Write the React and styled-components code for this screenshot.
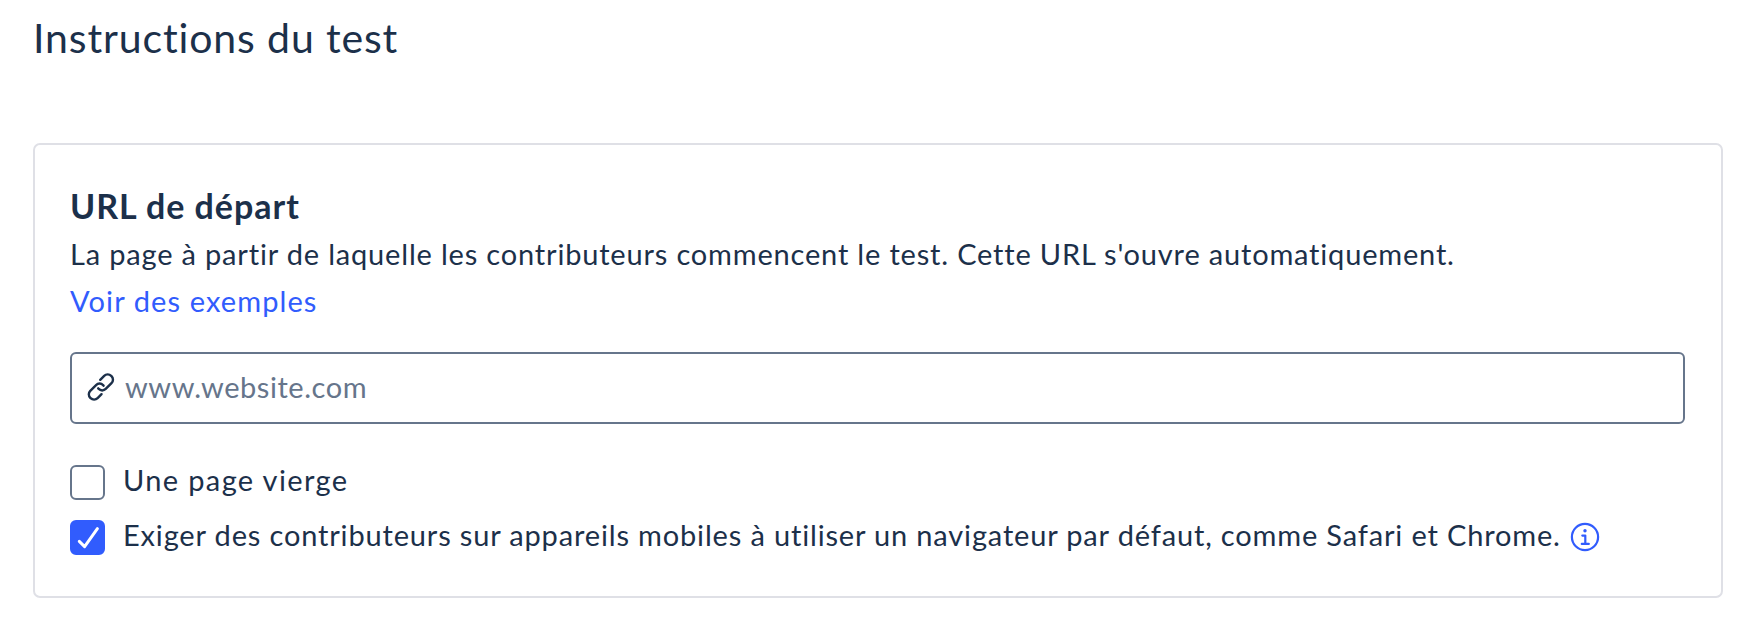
import React, { useState } from 'react'
import styled, { createGlobalStyle } from 'styled-components'

const GlobalStyle = createGlobalStyle`
  * {
    box-sizing: border-box;
  }
  body {
    margin: 0;
    background: #ffffff;
    color: #1c304a;
    font-family: Lato, "Open Sans", sans-serif;
    font-size: 29px;
  }
`;

const Container = styled.main`
  width: 1760px;
  height: 634px;
  padding: 14px 37px 0 33px;
`;

const Title = styled.h1`
  margin: 0 0 81px;
  font-size: 41px;
  font-weight: 400;
  line-height: 48px;
  letter-spacing: 0.87px;
`;

const Card = styled.section`
  height: 455px;
  padding: 39px 36px 0 35px;
  border: 2px solid #dfe0e6;
  border-radius: 7px;
`;

const Heading = styled.h2`
  margin: 0 0 2px;
  font-size: 34px;
  font-weight: 700;
  line-height: 44px;
  letter-spacing: 0.98px;
`;

const Description = styled.p`
  margin: 0;
  line-height: 47px;
  letter-spacing: 0.82px;
  white-space: nowrap;
`;

const ExamplesLink = styled.a`
  display: block;
  width: fit-content;
  line-height: 47px;
  letter-spacing: 1.1px;
  color: #315cfd;
  text-decoration: none;
`;

const Field = styled.label`
  display: flex;
  align-items: center;
  height: 72px;
  margin-top: 28px;
  padding-left: 15px;
  border: 2px solid #66758b;
  border-radius: 6px;
  svg {
    margin-bottom: 2px;
  }
`;

const UrlInput = styled.input`
  flex: 1;
  height: 60px;
  margin-left: 10px;
  padding: 0 0 4px;
  border: 0;
  outline: 0;
  background: transparent;
  font: inherit;
  color: inherit;
  letter-spacing: 0.54px;
  &::placeholder {
    color: #66758b;
    opacity: 1;
  }
`;

const Options = styled.div`
  display: flex;
  flex-direction: column;
  gap: 20px;
  margin-top: 41px;
`;

const Option = styled.label`
  display: flex;
  align-items: flex-start;
  height: 35px;
  cursor: pointer;
  input {
    appearance: none;
    width: 0;
    height: 0;
    margin: 0;
  }
`;

const Box = styled.span`
  display: flex;
  flex: none;
  width: 35px;
  height: 35px;
  margin-right: 18px;
  border: 2px solid ${p => p.$checked ? '#315cfd' : '#66758b'};
  border-radius: 6px;
  background: ${p => p.$checked ? '#315cfd' : '#ffffff'};
`;

const OptionText = styled.span`
  line-height: 30px;
  letter-spacing: ${p => p.$spacing};
  white-space: nowrap;
`;

const InfoButton = styled.button`
  display: flex;
  margin: 2px 0 0 9px;
  padding: 0;
  border: 0;
  background: none;
  cursor: pointer;
`;

const LinkIcon = () => (
  <svg width="28" height="28" viewBox="1 1 25.6 25.6" fill="none" stroke="#1c304a" strokeWidth="2.2" strokeLinecap="round" strokeLinejoin="round">
    <path d="M13.1 7.2l3.6-3.6a4.5 4.5 0 0 1 6.4 0l.3.3a4.5 4.5 0 0 1 0 6.4l-5.3 5.3a4.5 4.5 0 0 1-6.4 0l-.5-.6" />
    <path d="M14.3 20.4l-3.6 3.6a4.5 4.5 0 0 1-6.4 0l-.3-.3a4.5 4.5 0 0 1 0-6.4l5.3-5.3a4.5 4.5 0 0 1 6.4 0l.5.6" />
  </svg>
)

const CheckIcon = () => (
  <svg width="31" height="31" viewBox="0 0 31 31" fill="none" stroke="#ffffff" strokeWidth="3" strokeLinecap="round" strokeLinejoin="round">
    <path d="M7.3 19.4l5.3 5.2L25.4 6.7" />
  </svg>
)

const InfoIcon = () => (
  <svg width="30" height="30" viewBox="0 0 30 30" fill="none" stroke="#315cfd" strokeWidth="2.2" strokeLinecap="round" strokeLinejoin="round">
    <circle cx="15" cy="15" r="13.1" />
    <path d="M12.3 13.6h3v8.2M11.8 21.9h7" />
    <circle cx="15" cy="8.7" r="1.7" fill="#315cfd" stroke="none" />
  </svg>
)

const App = () => {
  const [url, setUrl] = useState('');
  const [blankPage, setBlankPage] = useState(false);
  const [defaultBrowser, setDefaultBrowser] = useState(true);

  return (
    <Container>
      <GlobalStyle />
      <Title>Instructions du test</Title>
      <Card>
        <Heading>URL de départ</Heading>
        <Description>
          La page à partir de laquelle les contributeurs commencent le test. Cette URL s'ouvre automatiquement.
        </Description>
        <ExamplesLink href="#">Voir des exemples</ExamplesLink>
        <Field>
          <LinkIcon />
          <UrlInput placeholder="www.website.com" value={url} onChange={(e) => setUrl(e.target.value)} />
        </Field>
        <Options>
          <Option>
            <input type="checkbox" checked={blankPage} onChange={() => setBlankPage(!blankPage)} />
            <Box $checked={blankPage}>{blankPage && <CheckIcon />}</Box>
            <OptionText $spacing="1.36px">Une page vierge</OptionText>
          </Option>
          <Option>
            <input type="checkbox" checked={defaultBrowser} onChange={() => setDefaultBrowser(!defaultBrowser)} />
            <Box $checked={defaultBrowser}>{defaultBrowser && <CheckIcon />}</Box>
            <OptionText $spacing="0.84px">
              Exiger des contributeurs sur appareils mobiles à utiliser un navigateur par défaut, comme Safari et Chrome.
            </OptionText>
            <InfoButton type="button"><InfoIcon /></InfoButton>
          </Option>
        </Options>
      </Card>
    </Container>
  )
}

export default App
